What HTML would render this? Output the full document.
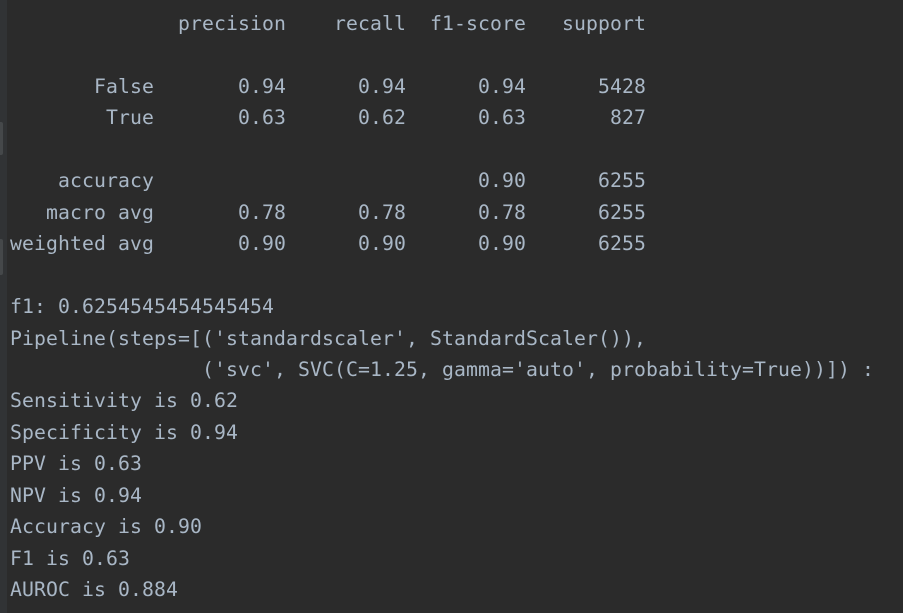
<!DOCTYPE html>
<html><head><style>
html,body{margin:0;padding:0;width:903px;height:613px;overflow:hidden;background:#2b2b2b}
.strip{position:absolute;left:0;top:0;width:7px;height:613px;background:#313335}
.m{position:absolute;left:0;width:3px;background:#45484a;border-radius:0 2px 2px 0}
pre{position:absolute;left:10px;top:8px;margin:0;font-family:"DejaVu Sans Mono","Liberation Mono",monospace;font-size:19.8px;line-height:31.45px;color:#a9b7c6;letter-spacing:0.09px}
</style></head><body>
<div class="strip"></div>
<div class="m" style="top:122px;height:33px"></div>
<div class="m" style="top:239px;height:36px"></div>
<pre>              precision    recall  f1-score   support

       False       0.94      0.94      0.94      5428
        True       0.63      0.62      0.63       827

    accuracy                           0.90      6255
   macro avg       0.78      0.78      0.78      6255
weighted avg       0.90      0.90      0.90      6255

f1: 0.6254545454545454
Pipeline(steps=[('standardscaler', StandardScaler()),
                ('svc', SVC(C=1.25, gamma='auto', probability=True))]) :
Sensitivity is 0.62
Specificity is 0.94
PPV is 0.63
NPV is 0.94
Accuracy is 0.90
F1 is 0.63
AUROC is 0.884</pre>
</body></html>
